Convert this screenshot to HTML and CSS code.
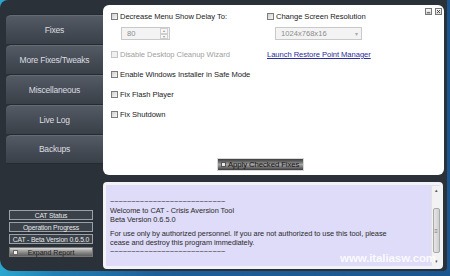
FILE: index.html
```html
<!DOCTYPE html>
<html>
<head>
<meta charset="utf-8">
<title>CAT - Crisis Aversion Tool</title>
<link rel="stylesheet" href="styles.css">
</head>
<body>
<div class="desk">
  <div class="win">
    <aside class="side">
      <nav class="nav">
        <div class="nb">Fixes</div>
        <div class="nb">More Fixes/Tweaks</div>
        <div class="nb">Miscellaneous</div>
        <div class="nb">Live Log</div>
        <div class="nb">Backups</div>
      </nav>
      <div class="stat">
        <div class="sb">CAT Status</div>
        <div class="sb">Operation Progress</div>
        <div class="sb">CAT - Beta Version 0.6.5.0</div>
        <div class="exp"><span class="sq"></span><span class="exp-t">Expand Report</span></div>
      </div>
    </aside>
    <main class="main">
      <section class="top">
        <div class="wctl">
          <span class="wb"><svg width="6" height="6" viewBox="0 0 6 6"><path d="M1 4.5h4" stroke="#333" stroke-width="1"/></svg></span>
          <span class="wb"><svg width="6" height="6" viewBox="0 0 6 6"><path d="M1.2 1.2l3.6 3.6M4.8 1.2l-3.6 3.6" stroke="#333" stroke-width="1"/></svg></span>
        </div>
        <div class="cols">
          <div class="col">
            <div class="row"><span class="cb"></span><span>Decrease Menu Show Delay To:</span></div>
            <div class="spin"><span class="spin-v">80</span><span class="spin-b"><span class="sbtn">▴</span><span class="sbtn">▾</span></span></div>
            <div class="row gap dis"><span class="cb cbd"></span><span>Disable Desktop Cleanup Wizard</span></div>
            <div class="row gap"><span class="cb"></span><span>Enable Windows Installer in Safe Mode</span></div>
            <div class="row gap"><span class="cb"></span><span>Fix Flash Player</span></div>
            <div class="row gap"><span class="cb"></span><span>Fix Shutdown</span></div>
          </div>
          <div class="col">
            <div class="row"><span class="cb"></span><span>Change Screen Resolution</span></div>
            <div class="combo"><span class="combo-v">1024x768x16</span><span class="combo-a">▾</span></div>
            <div class="row gap"><a class="link" href="#">Launch Restore Point Manager</a></div>
          </div>
        </div>
        <div class="apply"><span class="rd"></span><span>Apply Checked Fixes</span></div>
      </section>
      <section class="log">
        <div class="txt">
          <div class="ln">~~~~~~~~~~~~~~~~~~~~~~~~~~~</div>
          <div class="ln">Welcome to CAT - Crisis Aversion Tool</div>
          <div class="ln">Beta Version 0.6.5.0</div>
          <div class="ln para">For use only by authorized personnel. If you are not authorized to use this tool, please</div>
          <div class="ln">cease and destroy this program immediately.</div>
          <div class="ln">~~~~~~~~~~~~~~~~~~~~~~~~~~~</div>
        </div>
        <div class="scroll">
          <span class="sarr">▴</span>
          <span class="strack"><span class="thumb">≡</span></span>
          <span class="sarr">▾</span>
        </div>
        <div class="wm">www.italiasw.com</div>
      </section>
    </main>
  </div>
</div>
</body>
</html>
```

FILE: styles.css
```css
* { box-sizing: border-box; }
html, body { margin: 0; padding: 0; }
body {
  width: 450px;
  height: 276px;
  overflow: hidden;
  font-family: "Liberation Sans", Arial, sans-serif;
}
.desk {
  width: 450px;
  height: 276px;
  background: linear-gradient(90deg, #2aa7cf 0%, #2080b6 12%, #1d5e98 35%, #1c5690 100%);
}
.win {
  width: 447px;
  height: 271px;
  background: #2b3139;
  border-radius: 8px 0 4px 12px;
  display: flex;
}
.side {
  width: 103px;
  flex: none;
  padding: 14px 0 14px 6px;
  display: flex;
  flex-direction: column;
}
.nav { display: flex; flex-direction: column; }
.nb {
  height: 30px;
  width: 97px;
  display: flex;
  align-items: center;
  justify-content: center;
  font-size: 8.5px;
  letter-spacing: -0.2px;
  color: #dcdde0;
  background: linear-gradient(#555c65 0%, #484e57 45%, #3a4048 100%);
  border-top: 1px solid #262b31;
  border-radius: 5px 0 0 0;
  box-shadow: inset 0 1px 0 #646b74;
}
.nb:last-child { border-bottom: 1px solid #262b31; }
.stat {
  margin-top: auto;
  margin-left: 3px;
  width: 84px;
  display: flex;
  flex-direction: column;
  gap: 2px;
}
.sb {
  height: 10px;
  border: 1px solid #9ca1a7;
  background: #3b4148;
  color: #e4e6e8;
  font-size: 6.8px;
  letter-spacing: -0.15px;
  display: flex;
  align-items: center;
  justify-content: center;
  white-space: nowrap;
}
.exp {
  margin-top: 1px;
  height: 10px;
  border: 1px solid #777;
  background: linear-gradient(#dcdcdc 0%, #a8a8a8 30%, #7a7a7a 70%, #5e5e5e 100%);
  display: flex;
  align-items: center;
  font-size: 7px;
  color: #1c1c1c;
  padding-left: 3px;
}
.sq {
  width: 5px;
  height: 5px;
  background: #f0f0f0;
  border: 1px solid #666;
  flex: none;
}
.exp-t { flex: 1; text-align: center; margin-right: 8px; }

.main {
  flex: 1;
  padding: 5px 3px 2px 0;
  display: flex;
  flex-direction: column;
  gap: 7px;
}
.top {
  position: relative;
  height: 170px;
  background: #ffffff;
  border-radius: 6px;
  padding: 5px 0 4px 8px;
  display: flex;
  flex-direction: column;
  font-size: 7.6px;
  color: #222;
}
.wctl {
  position: absolute;
  top: 3px;
  right: 2px;
  display: flex;
  gap: 3px;
}
.wb {
  width: 7px;
  height: 7px;
  border: 1px solid #777;
  background: linear-gradient(#fafafa, #d8d8d8);
  display: flex;
  align-items: center;
  justify-content: center;
}
.wb svg { display: block; width: 5px; height: 5px; }
.cols {
  display: grid;
  grid-template-columns: 156px 1fr;
}
.col { display: flex; flex-direction: column; }
.row {
  height: 12px;
  display: flex;
  align-items: center;
  gap: 2px;
  white-space: nowrap;
  letter-spacing: -0.05px;
}
.row.gap { margin-top: 8px; }
.dis { color: #a0a0a0; }
.cb {
  width: 7px;
  height: 7px;
  flex: none;
  border: 1px solid #7d7d7d;
  background: linear-gradient(135deg, #cfcfcf, #f7f7f7);
}
.cbd { border-color: #c4c4c4; background: #f0f0f0; }
.spin {
  margin: 5px 0 0 10px;
  width: 49px;
  height: 13px;
  border: 1px solid #c9c9c9;
  background: #f3f3f3;
  display: flex;
  align-items: center;
  color: #8c8c8c;
}
.spin-v { flex: 1; padding-left: 5px; }
.spin-b {
  width: 8px;
  height: 11px;
  margin-right: 1px;
  display: flex;
  flex-direction: column;
}
.sbtn {
  flex: 1;
  border: 1px solid #cfcfcf;
  background: #f8f8f8;
  font-size: 4px;
  line-height: 3px;
  text-align: center;
  color: #999;
}
.combo {
  margin: 5px 0 0 8px;
  width: 87px;
  height: 13px;
  border: 1px solid #c9c9c9;
  background: #f3f3f3;
  display: flex;
  align-items: center;
  color: #8c8c8c;
}
.combo-v { flex: 1; padding-left: 5px; }
.combo-a { width: 10px; font-size: 6px; color: #aaa; text-align: center; }
.link { color: #2c2c9c; text-decoration: underline; }
.apply {
  margin-top: auto;
  margin-left: 106px;
  width: 87px;
  height: 13px;
  border: 1px solid #d8d8d8;
  background: linear-gradient(#3e3e3e 0%, #6a6a6a 25%, #a4a4a4 50%, #6e6e6e 78%, #3c3c3c 100%);
  display: flex;
  align-items: center;
  gap: 2px;
  padding-left: 3px;
  color: #111;
  font-size: 7.8px;
  white-space: nowrap;
  letter-spacing: -0.1px;
}
.rd {
  width: 5px;
  height: 5px;
  background: #e8e8e8;
  border: 1px solid #555;
  flex: none;
}
.log {
  position: relative;
  height: 87px;
  margin-right: 1px;
  background: #dedcf8;
  border: 3px solid #f3f3f5;
  border-radius: 4px;
  display: flex;
}
.txt {
  flex: 1;
  padding: 12px 0 0 4px;
  font-size: 7.4px;
  color: #2a2a2a;
  letter-spacing: -0.05px;
}
.ln { height: 9px; line-height: 9px; white-space: nowrap; }
.ln.para { margin-top: 5px; }
.scroll {
  width: 9px;
  margin: 1px 0 0 0;
  background: #f2f2f2;
  border-left: 1px solid #e2e2e2;
  display: flex;
  flex-direction: column;
  align-items: center;
}
.sarr { height: 9px; font-size: 5px; line-height: 9px; color: #555; }
.strack { flex: 1; width: 100%; display: flex; flex-direction: column; justify-content: flex-end; padding-bottom: 4px; }
.thumb {
  height: 45px;
  margin: 0 0.5px;
  border: 1px solid #a9a9a9;
  border-radius: 2px;
  background: linear-gradient(90deg, #e6e6e6, #cfcfcf);
  font-size: 6px;
  color: #777;
  display: flex;
  align-items: center;
  justify-content: center;
}
.wm {
  position: absolute;
  right: 4px;
  bottom: 2px;
  font-size: 11.5px;
  font-weight: bold;
  color: rgba(255, 255, 255, 0.88);
  letter-spacing: -0.1px;
}
```
